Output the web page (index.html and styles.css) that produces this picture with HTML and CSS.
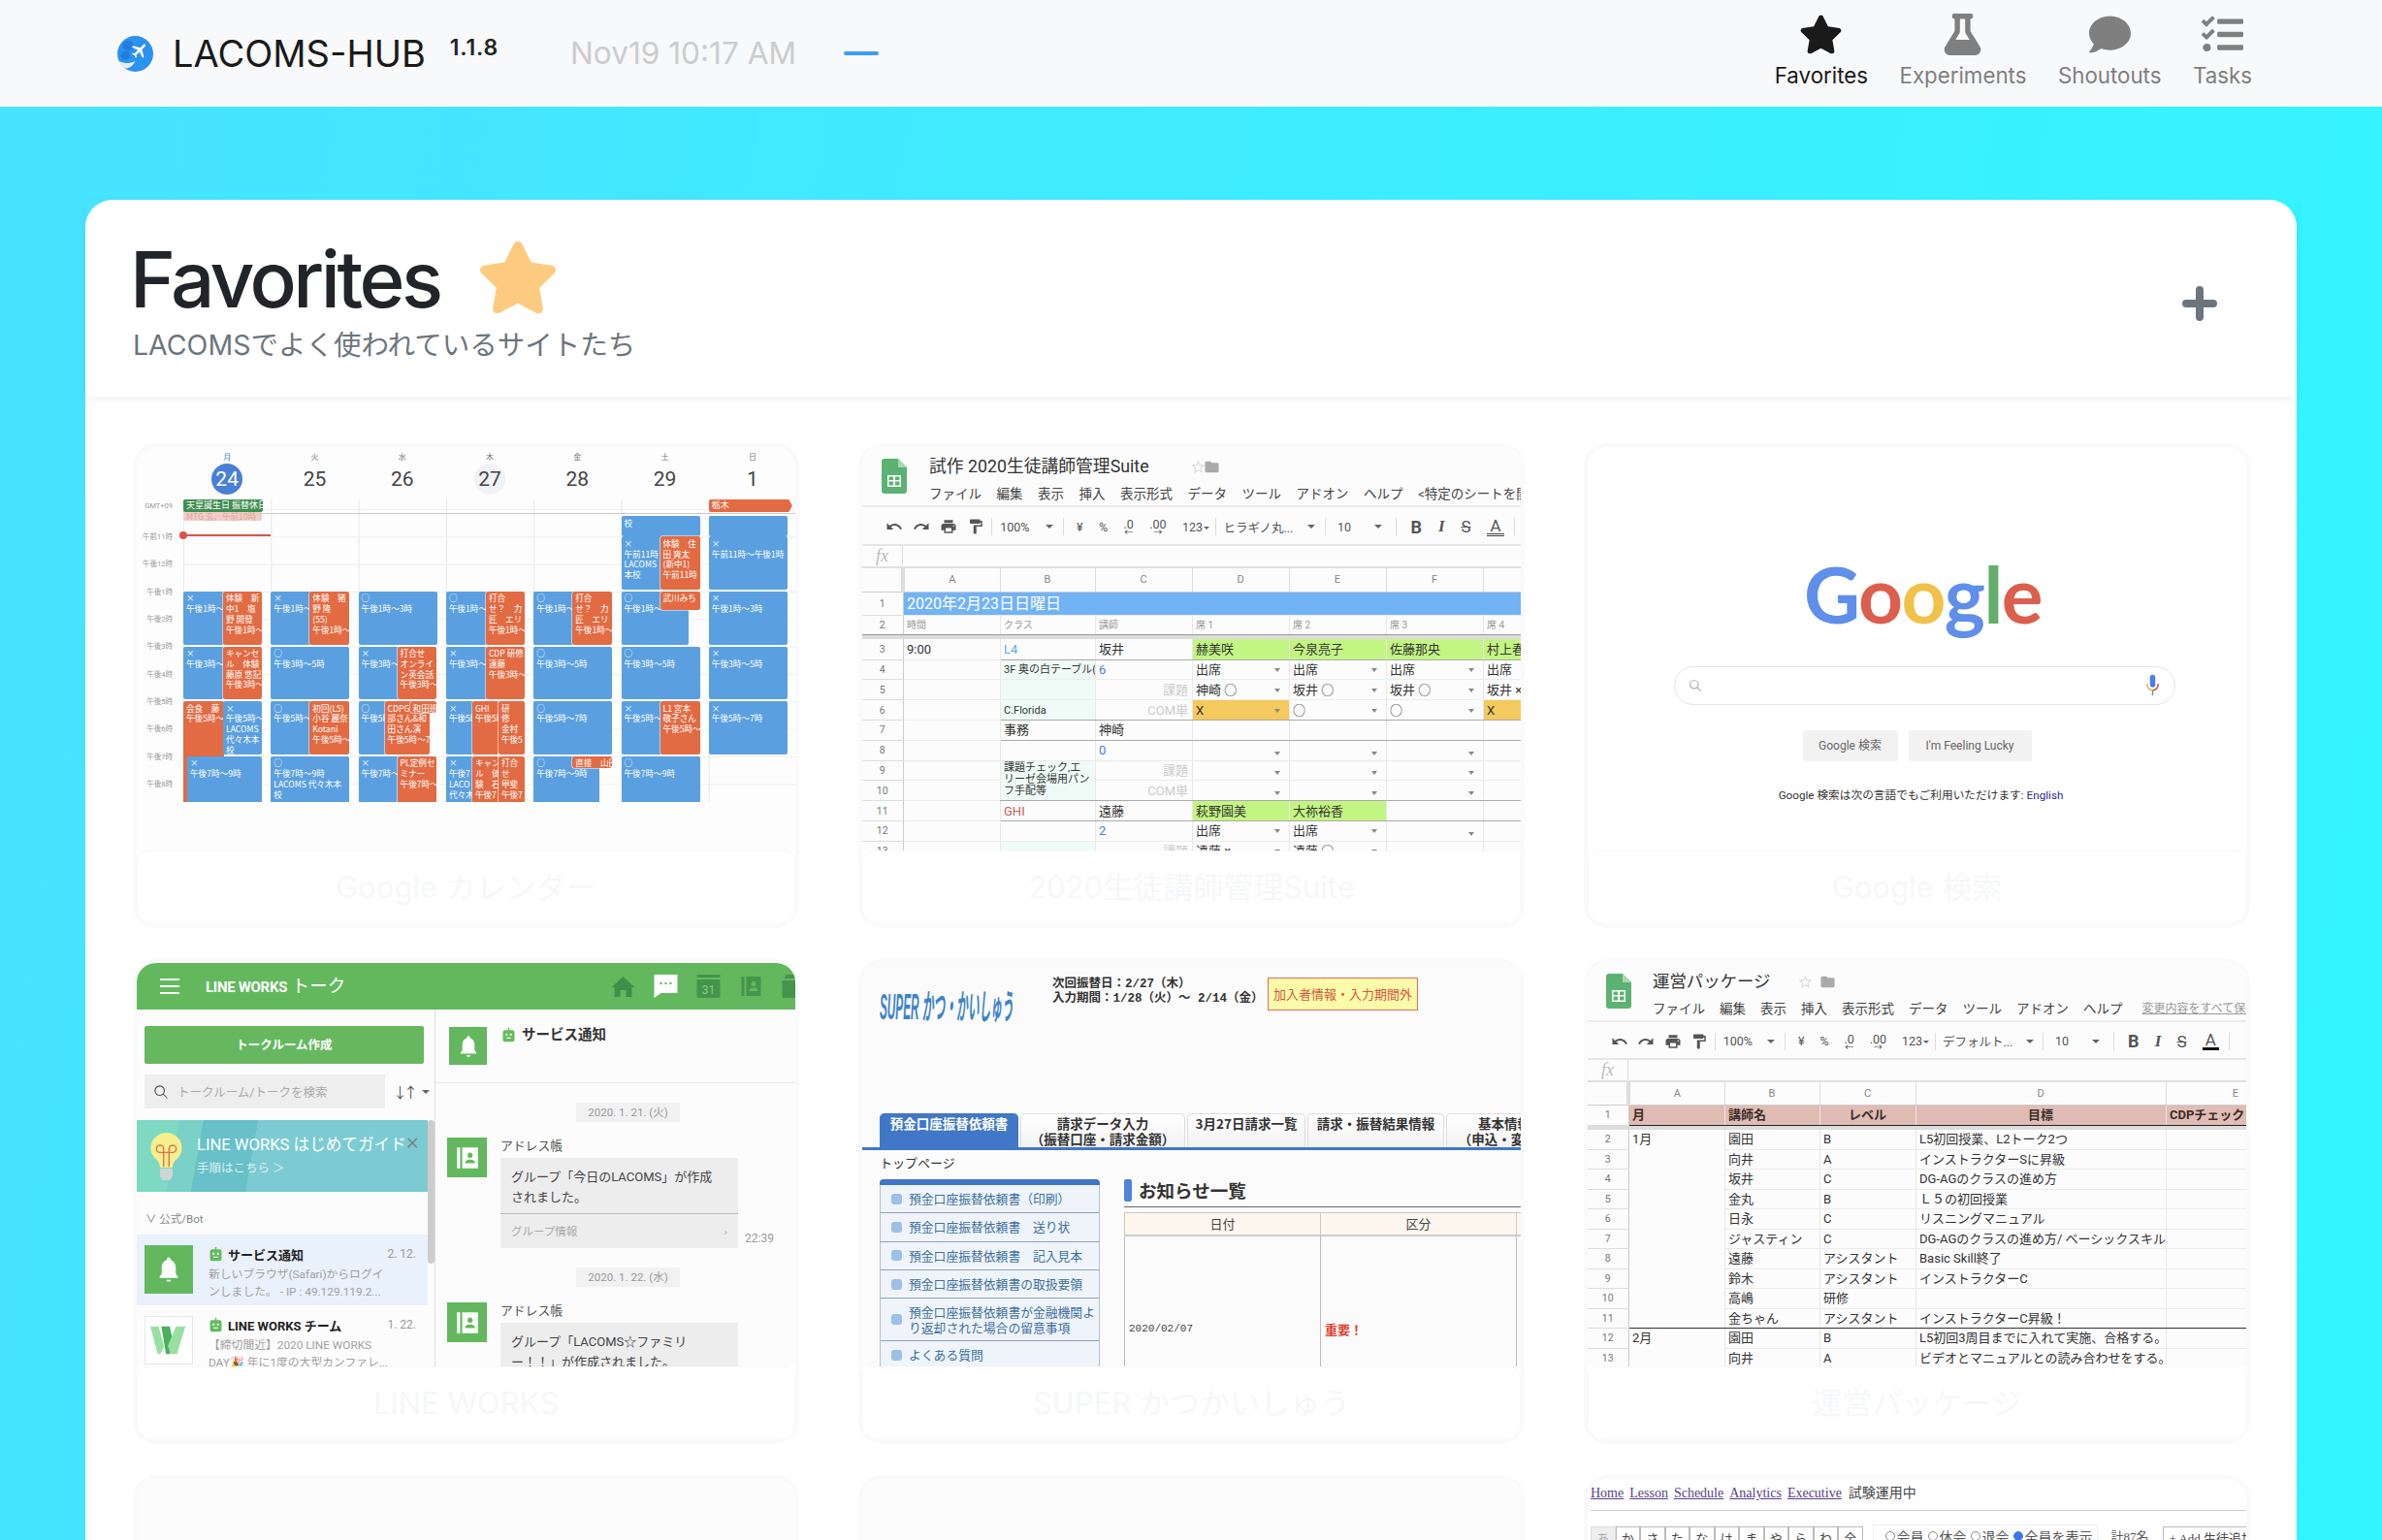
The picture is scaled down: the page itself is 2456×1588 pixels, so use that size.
FILE: index.html
```html
<!DOCTYPE html>
<html lang="ja">
<head>
<meta charset="utf-8">
<title>LACOMS-HUB</title>
<link rel="stylesheet" href="styles.css">
</head>
<body>
<svg class="defs" aria-hidden="true">
  <symbol id="i-star" viewBox="0 0 576 512"><path d="M259.3 17.8L194 150.2 47.9 171.5c-26.2 3.8-36.7 36.1-17.7 54.6l105.7 103-25 145.5c-4.5 26.3 23.2 46 46.4 33.7L288 439.6l130.7 68.7c23.2 12.2 50.9-7.4 46.4-33.7l-25-145.5 105.7-103c19-18.5 8.5-50.8-17.7-54.6L382 150.2 316.7 17.8c-11.7-23.6-45.6-23.9-57.4 0z"/></symbol>
  <symbol id="i-undo" viewBox="0 0 24 24"><path d="M12.5 8c-2.65 0-5.05.99-6.9 2.6L2 7v9h9l-3.62-3.62c1.39-1.16 3.16-1.88 5.12-1.88 3.54 0 6.55 2.31 7.6 5.5l2.37-.78C21.08 11.03 17.15 8 12.5 8z"/></symbol>
  <symbol id="i-redo" viewBox="0 0 24 24"><path d="M18.4 10.6C16.55 8.99 14.15 8 11.5 8c-4.65 0-8.58 3.03-9.96 7.22L3.9 16c1.05-3.19 4.05-5.5 7.6-5.5 1.95 0 3.73.72 5.12 1.88L13 16h9V7l-3.6 3.6z"/></symbol>
  <symbol id="i-print" viewBox="0 0 24 24"><path d="M19 8H5c-1.66 0-3 1.34-3 3v6h4v4h12v-4h4v-6c0-1.66-1.34-3-3-3zm-3 11H8v-5h8v5zm3-7c-.55 0-1-.45-1-1s.45-1 1-1 1 .45 1 1-.45 1-1 1zm-1-9H6v4h12V3z"/></symbol>
  <symbol id="i-paint" viewBox="0 0 24 24"><path d="M18 4V3c0-.55-.45-1-1-1H5c-.55 0-1 .45-1 1v4c0 .55.45 1 1 1h12c.55 0 1-.45 1-1V6h1v4H9v11c0 .55.45 1 1 1h2c.55 0 1-.45 1-1v-9h8V4h-3z"/></symbol>
  <symbol id="i-sheet" viewBox="0 0 26 36"><path fill="#5cb272" d="M3 0H17L26 9V33a3 3 0 0 1-3 3H3a3 3 0 0 1-3-3V3a3 3 0 0 1 3-3Z"/><path fill="#a5d8b0" d="M17 0L26 9H17Z"/><path fill="#fff" d="M6 17H20V29H6ZM7.5 18.5V22H12V18.5ZM14 18.5V22H18.5V18.5ZM7.5 23.5V27.5H12V23.5ZM14 23.5V27.5H18.5V23.5Z" fill-rule="evenodd"/></symbol>
  <symbol id="i-folder" viewBox="0 0 24 24"><path d="M10 4H4c-1.1 0-2 .9-2 2v12c0 1.1.9 2 2 2h16c1.1 0 2-.9 2-2V8c0-1.1-.9-2-2-2h-8z"/></symbol>
  <symbol id="i-ostar" viewBox="0 0 24 24"><path d="M22 9.24l-7.19-.62L12 2 9.19 8.63 2 9.24l5.46 4.73L5.82 21 12 17.27 18.18 21l-1.63-7.03L22 9.24zM12 15.4l-3.76 2.27 1-4.28-3.32-2.88 4.38-.38L12 6.1l1.71 4.04 4.38.38-3.32 2.88 1 4.28L12 15.4z"/></symbol>
  <symbol id="i-bell" viewBox="0 0 24 24"><path d="M12 2a1.6 1.6 0 0 0-1.6 1.6v.6C7.6 5 6.2 7.5 6.2 10.5v5L4.5 18v1h15v-1l-1.700-2.500v-5c0-3-1.400-5.500-4.200-6.300v-.6A1.600 1.600 0 0 0 12 2zM10 20.500a2 1.500 0 0 0 4 0z"/></symbol>
  <symbol id="i-book" viewBox="0 0 24 24"><path d="M2 2h3v20H2zM7 2h15v20H7zM14.500 7a2.500 2.500 0 1 0 .01 0zM10 17v-1c0-1.800 3-2.500 4.500-2.500S19 14.200 19 16v1z" fill-rule="evenodd"/></symbol>
  <symbol id="i-bot" viewBox="0 0 20 20"><path fill="#66bb5e" d="M9 0h2v3h4a3 3 0 0 1 3 3v10a3 3 0 0 1-3 3H5a3 3 0 0 1-3-3V6a3 3 0 0 1 3-3h4z"/><circle cx="7" cy="9" r="1.500" fill="#fff"/><circle cx="13" cy="9" r="1.500" fill="#fff"/><rect x="7" y="13" width="6" height="1.500" fill="#fff"/></symbol>
  <symbol id="i-search" viewBox="0 0 24 24"><path d="M10 2a8 8 0 0 1 6.200 13l6 6.200-1.100 1-6-6.100A8 8 0 1 1 10 2zm0 1.600a6.400 6.400 0 1 0 0 12.800 6.400 6.400 0 0 0 0-12.800z"/></symbol>
</svg>

<header class="topbar">
  <svg class="logo" viewBox="0 0 40 40">
    <circle cx="20" cy="20" r="20" fill="#2b93ef"/>
    <circle cx="12" cy="11" r="6" fill="#1f7fdc"/>
    <circle cx="9" cy="22" r="5" fill="#1f7fdc"/>
    <path fill="#e8ecef" d="M2 28c6 3 12 3 18 0-3 6-8 9-12 8-3-1-5-4-6-8z"/>
    <path fill="#fff" transform="translate(13 6) rotate(45 12 12) scale(.9)" d="M21 16v-2l-8-5V3.500c0-.830-.670-1.500-1.500-1.500S10 2.670 10 3.500V9l-8 5v2l8-2.500V19l-2 1.500V22l3.500-1 3.500 1v-1.500L13 19v-5.500l8 2.500z"/>
  </svg>
  <span class="brand">LACOMS-HUB</span>
  <span class="version">1.1.8</span>
  <span class="clock">Nov19 10:17 AM</span>
  <span class="dash"></span>
  <nav class="nav">
    <a class="nav-item is-active">
      <svg class="nav-icon" viewBox="0 0 576 512"><use href="#i-star"/></svg>
      <span>Favorites</span>
    </a>
    <a class="nav-item">
      <svg class="nav-icon" viewBox="0 0 448 512"><path d="M437.2 403.5L320 215V64h8c13.3 0 24-10.7 24-24V24c0-13.3-10.7-24-24-24H120c-13.3 0-24 10.7-24 24v16c0 13.3 10.7 24 24 24h8v151L10.8 403.5C-18.5 450.6 15.3 512 70.9 512h306.2c55.7 0 89.4-61.5 60.1-108.5zM137.9 320l48.2-77.6c3.7-5.2 5.8-11.6 5.8-18.4V64h64v160c0 6.9 2.2 13.2 5.800 18.4l48.2 77.6h-172z"/></svg>
      <span>Experiments</span>
    </a>
    <a class="nav-item">
      <svg class="nav-icon" viewBox="0 0 512 512"><path d="M256 32C114.6 32 0 125.1 0 240c0 49.6 21.4 95 57 130.7C44.5 421.1 2.7 466 2.2 466.5c-2.2 2.3-2.8 5.7-1.5 8.7S4.8 480 8 480c66.3 0 116-31.8 140.6-51.4 32.7 12.3 69 19.4 107.4 19.4 141.4 0 256-93.1 256-208S397.4 32 256 32z"/></svg>
      <span>Shoutouts</span>
    </a>
    <a class="nav-item">
      <svg class="nav-icon" viewBox="0 0 512 512"><path d="M139.61 35.5a12 12 0 0 0-17 0L58.93 98.81l-22.7-22.12a12 12 0 0 0-17 0L3.53 92.41a12 12 0 0 0 0 17l47.59 47.4a12.78 12.78 0 0 0 17.61 0l15.59-15.62L156.52 69a12.09 12.09 0 0 0 .09-17zm0 159.19a12 12 0 0 0-17 0l-63.68 63.72-22.7-22.1a12 12 0 0 0-17 0L3.53 252a12 12 0 0 0 0 17L51 316.5a12.77 12.77 0 0 0 17.6 0l15.7-15.69 72.2-72.22a12 12 0 0 0 .09-16.9zM64 368c-26.49 0-48.59 21.5-48.59 48S37.53 464 64 464a48 48 0 0 0 0-96zm432 16H208a16 16 0 0 0-16 16v32a16 16 0 0 0 16 16h288a16 16 0 0 0 16-16v-32a16 16 0 0 0-16-16zm0-320H208a16 16 0 0 0-16 16v32a16 16 0 0 0 16 16h288a16 16 0 0 0 16-16V80a16 16 0 0 0-16-16zm0 160H208a16 16 0 0 0-16 16v32a16 16 0 0 0 16 16h288a16 16 0 0 0 16-16v-32a16 16 0 0 0-16-16z"/></svg>
      <span>Tasks</span>
    </a>
  </nav>
</header>

<main class="panel">
  <section class="panel-head">
    <div>
      <h1 class="title">Favorites<svg class="title-star" viewBox="0 0 576 512"><use href="#i-star"/></svg></h1>
      <p class="subtitle">LACOMSでよく使われているサイトたち</p>
    </div>
    <svg class="add" viewBox="0 0 36 36"><path d="M18 0a4 4 0 0 1 4 4v10h10a4 4 0 0 1 0 8H22v10a4 4 0 0 1-8 0V22H4a4 4 0 0 1 0-8h10V4a4 4 0 0 1 4-4z"/></svg>
  </section>

  <section class="grid">

    <!-- Google Calendar -->
    <article class="card">
      <div class="thumb cal">
        <div class="cal-head">
          <div class="cal-day is-today"><small>月</small><b>24</b></div>
          <div class="cal-day"><small>火</small><b>25</b></div>
          <div class="cal-day"><small>水</small><b>26</b></div>
          <div class="cal-day is-soft"><small>木</small><b>27</b></div>
          <div class="cal-day"><small>金</small><b>28</b></div>
          <div class="cal-day"><small>土</small><b>29</b></div>
          <div class="cal-day"><small>日</small><b>1</b></div>
        </div>
        <div class="cal-body">
          <div class="hours">
            <span class="gmt">GMT+09</span>
            <span>午前11時</span><span>午後12時</span><span>午後1時</span><span>午後2時</span><span>午後3時</span><span>午後4時</span><span>午後5時</span><span>午後6時</span><span>午後7時</span><span>午後8時</span>
          </div>
          <div class="lanes">
            <div class="ev g allday" style="--d:0;--w:82">天皇誕生日 振替休日</div>
            <div class="ev p allday2" style="--d:0;--w:81">MTG 玄、午前10時</div>
            <div class="ev o allday tag" style="--d:6;--w:86">栃木</div>
            <div class="now"></div>

            <div class="ev b" style="--d:0;--t:13;--w:42">×<br>午後1時〜</div>
            <div class="ev o" style="--d:0;--x:41;--t:13;--w:40">体験　新<br>中1　塩<br>野 開發<br>午後1時〜</div>
            <div class="ev b" style="--d:0;--t:15;--w:42">×<br>午後3時〜</div>
            <div class="ev o" style="--d:0;--x:41;--t:15;--w:40">キャンセ<br>ル　体験<br>藤原 悠記<br>午後3時〜</div>
            <div class="ev o" style="--d:0;--t:17;--h:6;--w:42">会食　藤<br>午後5時〜</div>
            <div class="ev b" style="--d:0;--x:41;--t:17;--w:40">×<br>午後5時〜<br>LACOMS<br>代々木本<br>校</div>
            <div class="ev b" style="--d:0;--x:4;--t:19;--h:4;--w:77">×<br>午後7時〜9時</div>

            <div class="ev b" style="--d:1;--t:13;--w:42">×<br>午後1時〜</div>
            <div class="ev o" style="--d:1;--x:40;--t:13;--w:41">体験　猪<br>野 隆<br>(55)<br>午後1時〜</div>
            <div class="ev b" style="--d:1;--t:15">○<br>午後3時〜5時</div>
            <div class="ev b" style="--d:1;--t:17;--w:42">○<br>午後5時〜</div>
            <div class="ev o" style="--d:1;--x:40;--t:17;--w:41">初回(L5)<br>小谷 麗奈<br>Kotani<br>午後5時〜</div>
            <div class="ev b" style="--d:1;--t:19;--h:4">○<br>午後7時〜9時<br>LACOMS 代々木本<br>校</div>

            <div class="ev b" style="--d:2;--t:13">○<br>午後1時〜3時</div>
            <div class="ev b" style="--d:2;--t:15;--w:42">×<br>午後3時〜</div>
            <div class="ev o" style="--d:2;--x:40;--t:15;--w:40">打合せ<br>オンライ<br>ン英会話<br>午後3時〜</div>
            <div class="ev b" style="--d:2;--t:17;--w:28">○<br>午後5時</div>
            <div class="ev o" style="--d:2;--x:27;--t:17;--w:46">CDPG<br>部さん&amp;和<br>田さん演<br>午後5時〜7</div>
            <div class="ev o" style="--d:2;--x:53;--t:17;--h:.5;--w:27">和田班</div>
            <div class="ev b" style="--d:2;--t:19;--h:4;--w:42">×<br>午後7時〜</div>
            <div class="ev o" style="--d:2;--x:40;--t:19;--h:4;--w:40">PL定例セ<br>ミナー<br>午後7時〜</div>

            <div class="ev b" style="--d:3;--t:13;--w:42">○<br>午後1時〜</div>
            <div class="ev o" style="--d:3;--x:41;--t:13;--w:40">打合<br>せ？　力<br>匠　エリ<br>午後1時〜</div>
            <div class="ev b" style="--d:3;--t:15;--w:42">×<br>午後3時〜</div>
            <div class="ev o" style="--d:3;--x:41;--t:15;--w:40">CDP 研修<br>遠藤<br>午後3時〜</div>
            <div class="ev b" style="--d:3;--t:17;--w:28">×<br>午後5時</div>
            <div class="ev o" style="--d:3;--x:27;--t:17;--w:27">GHI<br>午後5時</div>
            <div class="ev o" style="--d:3;--x:54;--t:17;--w:27">研<br>修<br>金村<br>午後5</div>
            <div class="ev b" style="--d:3;--t:19;--h:4;--w:28">×<br>午後7<br>LACO<br>代々木</div>
            <div class="ev o" style="--d:3;--x:27;--t:19;--h:4;--w:27">キャン<br>ル　価<br>験　石<br>午後7</div>
            <div class="ev o" style="--d:3;--x:54;--t:19;--h:4;--w:27">打合<br>せ<br>甲斐<br>午後7</div>

            <div class="ev b" style="--d:4;--t:13;--w:42">○<br>午後1時〜</div>
            <div class="ev o" style="--d:4;--x:40;--t:13;--w:41">打合<br>せ？　力<br>匠　エリ<br>午後1時〜</div>
            <div class="ev b" style="--d:4;--t:15">○<br>午後3時〜5時</div>
            <div class="ev b" style="--d:4;--t:17">○<br>午後5時〜7時</div>
            <div class="ev b" style="--d:4;--t:19;--h:4;--w:68">○<br>午後7時〜9時</div>
            <div class="ev o" style="--d:4;--x:40;--t:19;--h:.5;--w:41">直接　山田</div>

            <div class="ev b" style="--d:5;--t:10.25;--h:.8">校</div>
            <div class="ev b" style="--d:5;--t:11;--w:42">×<br>午前11時<br>LACOMS<br>本校</div>
            <div class="ev o" style="--d:5;--x:40;--t:11;--w:41">体験　住<br>田 爽太<br>(新中1)<br>午前11時</div>
            <div class="ev b" style="--d:5;--t:13;--w:69">○<br>午後1時〜</div>
            <div class="ev o" style="--d:5;--x:40;--t:13;--h:.75;--w:41">武川みち</div>
            <div class="ev b" style="--d:5;--t:15">○<br>午後3時〜5時</div>
            <div class="ev b" style="--d:5;--t:17;--w:42">×<br>午後5時〜</div>
            <div class="ev o" style="--d:5;--x:40;--t:17;--w:41">L1 宮本<br>敬子さん<br>午後5時〜</div>
            <div class="ev b" style="--d:5;--t:19;--h:4">○<br>午後7時〜9時</div>

            <div class="ev b" style="--d:6;--t:10.25;--h:.8"></div>
            <div class="ev b" style="--d:6;--t:11">×<br>午前11時〜午後1時</div>
            <div class="ev b" style="--d:6;--t:13">×<br>午後1時〜3時</div>
            <div class="ev b" style="--d:6;--t:15">×<br>午後3時〜5時</div>
            <div class="ev b" style="--d:6;--t:17">×<br>午後5時〜7時</div>
          </div>
        </div>
      </div>
      <div class="caption">Google カレンダー</div>
    </article>

    <!-- Sheet A -->
    <article class="card">
      <div class="thumb sheet sheet-a">
        <div class="sh-head">
          <svg class="sh-logo"><use href="#i-sheet"/></svg>
          <div>
            <div class="sh-title">試作 2020生徒講師管理Suite<svg class="sh-mini star"><use href="#i-ostar"/></svg><svg class="sh-mini"><use href="#i-folder"/></svg></div>
            <div class="sh-menu"><span>ファイル</span><span>編集</span><span>表示</span><span>挿入</span><span>表示形式</span><span>データ</span><span>ツール</span><span>アドオン</span><span>ヘルプ</span><span>&lt;特定のシートを開く&gt;</span></div>
          </div>
        </div>
        <div class="tb">
          <div class="tg g1"><svg class="ti"><use href="#i-undo"/></svg><svg class="ti"><use href="#i-redo"/></svg><svg class="ti"><use href="#i-print"/></svg><svg class="ti"><use href="#i-paint"/></svg></div>
          <div class="tg g2"><span>100%</span><i class="caret"></i></div>
          <div class="tg g3"><span>¥</span><span>%</span><span class="dec">.0<em>←</em></span><span class="dec">.00<em>→</em></span><span>123<i class="caret mini"></i></span></div>
          <div class="tg g4"><span>ヒラギノ丸...</span><i class="caret"></i></div>
          <div class="tg g5"><span>10</span><i class="caret"></i></div>
          <div class="tg g6"><b class="fmt">B</b><i class="fmt serif">I</i><s class="fmt">S</s><span class="fmt tcolor">A</span></div>
        </div>
        <div class="fx"><i>fx</i></div>
        <table class="tbl">
          <colgroup><col class="c-rh"><col class="c-100"><col class="c-98"><col class="c-100"><col class="c-100"><col class="c-100"><col class="c-100"><col class="c-100"></colgroup>
          <tr class="ch"><td class="corner"></td><td>A</td><td>B</td><td>C</td><td>D</td><td>E</td><td>F</td><td></td></tr>
          <tr class="r1"><td class="rh">1</td><td colspan="7" class="blue">2020年2月23日日曜日</td></tr>
          <tr class="r2"><td class="rh">2</td><td>時間</td><td>クラス</td><td>講師</td><td>席 1</td><td>席 2</td><td>席 3</td><td>席 4</td></tr>
          <tr class="freeze"><td colspan="8"></td></tr>
          <tr><td class="rh">3</td><td>9:00</td><td class="dk lblue">L4</td><td class="dk">坂井</td><td class="dk lime">赫美咲</td><td class="dk lime">今泉亮子</td><td class="dk lime">佐藤那央</td><td class="dk lime">村上春香</td></tr>
          <tr><td class="rh">4</td><td></td><td class="mint tiny">3F 奥の白テーブル(</td><td class="nblue">6</td><td class="dd">出席</td><td class="dd">出席</td><td class="dd">出席</td><td class="dd">出席</td></tr>
          <tr><td class="rh">5</td><td></td><td class="mint"></td><td class="ghost">課題</td><td class="dd">神崎 ○</td><td class="dd">坂井 ○</td><td class="dd">坂井 ○</td><td class="dd">坂井 ×</td></tr>
          <tr><td class="rh">6</td><td></td><td class="mint tiny dk">C.Florida</td><td class="ghost dk">COM単</td><td class="dd amber dk">X</td><td class="dd dk">○</td><td class="dd dk">○</td><td class="amber dk">X</td></tr>
          <tr><td class="rh">7</td><td></td><td class="dk">事務</td><td class="dk">神崎</td><td class="dk"></td><td class="dk"></td><td class="dk"></td><td class="dk"></td></tr>
          <tr><td class="rh">8</td><td></td><td></td><td class="nblue">0</td><td class="dd"></td><td class="dd"></td><td class="dd"></td><td></td></tr>
          <tr><td class="rh">9</td><td></td><td class="mint tiny wrap dk" rowspan="2">課題チェック,エ<br>リーゼ会場用パン<br>フ手配等</td><td class="ghost">課題</td><td class="dd"></td><td class="dd"></td><td class="dd"></td><td></td></tr>
          <tr><td class="rh">10</td><td></td><td class="ghost dk">COM単</td><td class="dd dk"></td><td class="dd dk"></td><td class="dd dk"></td><td class="dk"></td></tr>
          <tr><td class="rh">11</td><td></td><td class="dk red">GHI</td><td class="dk">遠藤</td><td class="dk lime">萩野園美</td><td class="dk lime">大祢裕香</td><td class="dk"></td><td class="dk"></td></tr>
          <tr><td class="rh">12</td><td></td><td></td><td class="nblue">2</td><td class="dd">出席</td><td class="dd">出席</td><td class="dd"></td><td></td></tr>
          <tr><td class="rh">13</td><td></td><td class="mint"></td><td class="ghost">課題</td><td class="dd">遠藤 ×</td><td class="dd">遠藤 ○</td><td class="dd"></td><td></td></tr>
        </table>
      </div>
      <div class="caption">2020生徒講師管理Suite</div>
    </article>

    <!-- Google -->
    <article class="card">
      <div class="thumb ggl">
        <div class="ggl-logo"><span class="cb">G</span><span class="cr">o</span><span class="cy">o</span><span class="cb">g</span><span class="cg">l</span><span class="cr">e</span></div>
        <div class="ggl-search">
          <svg class="ggl-lens"><use href="#i-search"/></svg>
          <svg class="ggl-mic" viewBox="0 0 14 24"><rect x="4" y="0" width="6" height="14" rx="3" fill="#4a80ec"/><path d="M1 10a6 6 0 0 0 6 7" fill="none" stroke="#e9b23e" stroke-width="1.600"/><path d="M13 10a6 6 0 0 1-6 7" fill="none" stroke="#d9493a" stroke-width="1.600"/><path d="M7 17v6" stroke="#5aae62" stroke-width="1.600"/></svg>
        </div>
        <div class="ggl-btns"><span class="ggl-btn b1">Google 検索</span><span class="ggl-btn b2">I'm Feeling Lucky</span></div>
        <p class="ggl-lang">Google 検索は次の言語でもご利用いただけます: <a>English</a></p>
      </div>
      <div class="caption">Google 検索</div>
    </article>

    <!-- LINE WORKS -->
    <article class="card">
      <div class="thumb lw">
        <div class="lw-bar">
          <div class="lw-burger"><i></i><i></i><i></i></div>
          <div class="lw-name"><b>LINE WORKS</b> トーク</div>
          <div class="lw-apps">
            <svg viewBox="0 0 24 24"><path fill="#3f8f4a" d="M12 2L0 13h3v10h6v-7h6v7h6V13h3z"/></svg>
            <svg viewBox="0 0 24 24"><path fill="#fff" d="M0 0h24v19H7l-7 5z"/><circle cx="7" cy="9" r="1.200" fill="#63b85e"/><circle cx="12" cy="9" r="1.200" fill="#63b85e"/><circle cx="17" cy="9" r="1.200" fill="#63b85e"/></svg>
            <svg viewBox="0 0 24 24"><path fill="#45944c" d="M0 0h24v3H0zM0 5h24v19H0z"/><text x="12" y="20" font-size="12" fill="#8ccb87" text-anchor="middle">31</text></svg>
            <svg viewBox="0 0 24 24" class="lw-book"><use href="#i-book"/></svg>
            <svg viewBox="0 0 24 24"><path fill="#45944c" d="M4 0h16l2 4H2zM0 6h24v18H0z"/></svg>
          </div>
        </div>
        <div class="lw-main">
          <div class="lw-left">
            <div class="lw-create">トークルーム作成</div>
            <div class="lw-find">
              <div class="lw-input"><svg><use href="#i-search"/></svg>トークルーム/トークを検索</div>
              <span class="lw-sort">↓↑<i class="caret"></i></span>
            </div>
            <div class="lw-scroll">
              <div class="lw-list">
                <div class="lw-banner">
                  <svg class="lw-bulb" viewBox="0 0 34 54"><path fill="#f7ee8e" d="M17 0a17 17 0 0 1 10 31c-2 2-3 5-3 8H10c0-3-1-6-3-8A17 17 0 0 1 17 0z"/><path fill="#cfd4d6" d="M10 40h14v8l-3 5h-8l-3-5z"/><path fill="none" stroke="#e0704e" stroke-width="1.500" d="M14 38V18a4 4 0 1 0-4 4h14a4 4 0 1 0-4-4v20"/></svg>
                  <div class="lw-bt">
                    <div class="lw-bt1">LINE WORKS はじめてガイド</div>
                    <div class="lw-bt2">手順はこちら ＞</div>
                  </div>
                  <span class="lw-x">×</span>
                </div>
                <div class="lw-sec">∨ 公式/Bot</div>
                <div class="lw-row is-sel">
                  <div class="lw-av"><svg><use href="#i-bell"/></svg></div>
                  <div class="lw-info">
                    <div class="lw-top"><svg class="lw-bot"><use href="#i-bot"/></svg><b>サービス通知</b><span>2. 12.</span></div>
                    <p>新しいブラウザ(Safari)からログイ<br>ンしました。 - IP : 49.129.119.2...</p>
                  </div>
                </div>
                <div class="lw-row">
                  <div class="lw-av is-w"><svg viewBox="0 0 40 30"><path fill="#98e0a0" d="M0 0h9l6 22-4 8H8z"/><path fill="#4aae5c" d="M12 0h9l4 18-4 12h-4z"/><path fill="#98e0a0" d="M22 30l-3-9 9-21h10L29 30z"/></svg></div>
                  <div class="lw-info">
                    <div class="lw-top"><svg class="lw-bot"><use href="#i-bot"/></svg><b>LINE WORKS チーム</b><span>1. 22.</span></div>
                    <p>【締切間近】2020 LINE WORKS<br>DAY🎉 年に1度の大型カンファレ...</p>
                  </div>
                </div>
              </div>
              <div class="lw-thumb"></div>
            </div>
          </div>
          <div class="lw-right">
            <div class="lw-chat-head">
              <div class="lw-av big"><svg><use href="#i-bell"/></svg></div>
              <svg class="lw-bot"><use href="#i-bot"/></svg><b>サービス通知</b>
            </div>
            <div class="lw-pill">2020. 1. 21. (火)</div>
            <div class="lw-msg">
              <div class="lw-av big"><svg><use href="#i-book"/></svg></div>
              <div class="lw-msg-body">
                <div class="lw-from">アドレス帳</div>
                <div class="lw-bubble-row">
                  <div class="lw-bubble"><p>グループ「今日のLACOMS」が作成<br>されました。</p><div class="lw-link">グループ情報<span>›</span></div></div>
                  <time>22:39</time>
                </div>
              </div>
            </div>
            <div class="lw-pill">2020. 1. 22. (水)</div>
            <div class="lw-msg">
              <div class="lw-av big"><svg><use href="#i-book"/></svg></div>
              <div class="lw-msg-body">
                <div class="lw-from">アドレス帳</div>
                <div class="lw-bubble-row">
                  <div class="lw-bubble"><p>グループ「LACOMS☆ファミリ<br>ー！！」が作成されました。</p></div>
                </div>
              </div>
            </div>
          </div>
        </div>
      </div>
      <div class="caption">LINE WORKS</div>
    </article>

    <!-- SUPER -->
    <article class="card">
      <div class="thumb sup">
        <div class="sup-top">
          <div class="sup-logo"><span>SUPER かつ・かいしゅう</span></div>
          <div class="sup-dates">次回振替日：2/27（木）<br>入力期間：1/28（火）〜 2/14（金）</div>
          <div class="sup-flag">加入者情報・入力期間外</div>
        </div>
        <div class="sup-tabs">
          <div class="sup-tab t1 is-on">預金口座振替依頼書</div>
          <div class="sup-tab t2">請求データ入力<br>（振替口座・請求金額）</div>
          <div class="sup-tab t3">3月27日請求一覧</div>
          <div class="sup-tab t4">請求・振替結果情報</div>
          <div class="sup-tab t5">基本情報<br>（申込・変更）</div>
        </div>
        <div class="sup-crumb">トップページ</div>
        <div class="sup-main">
          <ul class="sup-side">
            <li>預金口座振替依頼書（印刷）</li>
            <li>預金口座振替依頼書　送り状</li>
            <li>預金口座振替依頼書　記入見本</li>
            <li>預金口座振替依頼書の取扱要領</li>
            <li class="two">預金口座振替依頼書が金融機関よ<br>り返却された場合の留意事項</li>
            <li>よくある質問</li>
          </ul>
          <div class="sup-news">
            <h3>お知らせ一覧</h3>
            <table class="sup-table">
              <tr><th>日付</th><th>区分</th><th></th></tr>
              <tr><td class="mono">2020/02/07</td><td class="alert">重要！</td><td></td></tr>
            </table>
          </div>
        </div>
      </div>
      <div class="caption">SUPER かつかいしゅう</div>
    </article>

    <!-- Sheet B -->
    <article class="card">
      <div class="thumb sheet sheet-b">
        <div class="sh-head">
          <svg class="sh-logo"><use href="#i-sheet"/></svg>
          <div>
            <div class="sh-title">運営パッケージ<svg class="sh-mini star"><use href="#i-ostar"/></svg><svg class="sh-mini"><use href="#i-folder"/></svg></div>
            <div class="sh-menu"><span>ファイル</span><span>編集</span><span>表示</span><span>挿入</span><span>表示形式</span><span>データ</span><span>ツール</span><span>アドオン</span><span>ヘルプ</span><span class="sh-saved">変更内容をすべて保存しました</span></div>
          </div>
        </div>
        <div class="tb">
          <div class="tg g1"><svg class="ti"><use href="#i-undo"/></svg><svg class="ti"><use href="#i-redo"/></svg><svg class="ti"><use href="#i-print"/></svg><svg class="ti"><use href="#i-paint"/></svg></div>
          <div class="tg g2"><span>100%</span><i class="caret"></i></div>
          <div class="tg g3"><span>¥</span><span>%</span><span class="dec">.0<em>←</em></span><span class="dec">.00<em>→</em></span><span>123<i class="caret mini"></i></span></div>
          <div class="tg g4"><span>デフォルト...</span><i class="caret"></i></div>
          <div class="tg g5"><span>10</span><i class="caret"></i></div>
          <div class="tg g6"><b class="fmt">B</b><i class="fmt serif">I</i><s class="fmt">S</s><span class="fmt tcolor solid">A</span></div>
        </div>
        <div class="fx"><i>fx</i></div>
        <table class="tbl">
          <colgroup><col class="c-rh"><col class="c-99"><col class="c-98"><col class="c-99"><col class="c-258"><col class="c-144"></colgroup>
          <tr class="ch"><td class="corner"></td><td>A</td><td>B</td><td>C</td><td>D</td><td>E</td></tr>
          <tr class="rose"><td class="rh">1</td><td>月</td><td>講師名</td><td class="ctr">レベル</td><td class="ctr">目標</td><td>CDPチェック日</td></tr>
          <tr class="freeze"><td colspan="6"></td></tr>
          <tr><td class="rh">2</td><td class="noline">1月</td><td>園田</td><td>B</td><td>L5初回授業、L2トーク2つ</td><td></td></tr>
          <tr><td class="rh">3</td><td class="noline"></td><td>向井</td><td>A</td><td>インストラクターSに昇級</td><td></td></tr>
          <tr><td class="rh">4</td><td class="noline"></td><td>坂井</td><td>C</td><td>DG-AGのクラスの進め方</td><td></td></tr>
          <tr><td class="rh">5</td><td class="noline"></td><td>金丸</td><td>B</td><td>Ｌ５の初回授業</td><td></td></tr>
          <tr><td class="rh">6</td><td class="noline"></td><td>日永</td><td>C</td><td>リスニングマニュアル</td><td></td></tr>
          <tr><td class="rh">7</td><td class="noline"></td><td>ジャスティン</td><td>C</td><td>DG-AGのクラスの進め方/ ベーシックスキル</td><td></td></tr>
          <tr><td class="rh">8</td><td class="noline"></td><td>遠藤</td><td>アシスタント</td><td>Basic Skill終了</td><td></td></tr>
          <tr><td class="rh">9</td><td class="noline"></td><td>鈴木</td><td>アシスタント</td><td>インストラクターC</td><td></td></tr>
          <tr><td class="rh">10</td><td class="noline"></td><td>高嶋</td><td>研修</td><td></td><td></td></tr>
          <tr class="rule"><td class="rh">11</td><td></td><td>金ちゃん</td><td>アシスタント</td><td>インストラクターC昇級！</td><td></td></tr>
          <tr><td class="rh">12</td><td class="noline">2月</td><td>園田</td><td>B</td><td>L5初回3周目までに入れて実施、合格する。</td><td></td></tr>
          <tr><td class="rh">13</td><td class="noline"></td><td>向井</td><td>A</td><td>ビデオとマニュアルとの読み合わせをする。</td><td></td></tr>
        </table>
      </div>
      <div class="caption">運営パッケージ</div>
    </article>

    <article class="card"><div class="thumb"></div></article>
    <article class="card"><div class="thumb"></div></article>
    <article class="card">
      <div class="thumb crm">
        <div class="crm-links"><a>Home</a><a>Lesson</a><a>Schedule</a><a>Analytics</a><a>Executive</a><span>試験運用中</span></div>
        <div class="crm-tools">
          <div class="crm-kana"><button class="off">あ</button><button>か</button><button>さ</button><button>た</button><button>な</button><button>は</button><button>ま</button><button>や</button><button>ら</button><button>わ</button><button>全</button></div>
          <div class="crm-radio"><i></i>会員<i></i>休会<i></i>退会<i class="on"></i>全員を表示</div>
          <span class="crm-count">計87名</span>
          <button class="crm-add">+ Add 生徒追加</button>
        </div>
      </div>
    </article>

  </section>
</main>
</body>
</html>
```

FILE: styles.css
```css
* { box-sizing: border-box; }
html, body { margin: 0; height: 1588px; overflow: hidden; }
body {
  font-family: Inter, "Noto Sans CJK JP", sans-serif;
  background: linear-gradient(100deg, #48e3ff 0%, #33f5ff 100%);
  color: #212529;
}
.defs { display: none; }
p { margin: 0; }
ul { margin: 0; padding: 0; list-style: none; }

/* top bar */
.topbar { display: flex; align-items: center; height: 110px; padding: 0 134px 0 121px; background: #f8f9fa; }
.logo { width: 37px; height: 37px; flex: none; }
.brand { margin-left: 20px; font-size: 38px; line-height: 46px; color: #1a1a1a; }
.version { margin: 0 0 13px 25px; font-size: 23px; font-weight: 600; line-height: 28px; letter-spacing: .8px; color: #212529; }
.clock { margin-left: 74px; font-size: 31.600px; line-height: 40px; color: #ccc; }
.dash { width: 36px; height: 4px; margin-left: 49px; border-radius: 2px; background: #3b9cff; }
.nav { display: flex; gap: 32.500px; margin-left: auto; align-self: flex-start; padding-top: 14px; }
.nav-item { display: flex; flex-direction: column; align-items: center; font-size: 22.300px; line-height: 26px; color: #7f7f7f; }
.nav-item.is-active { color: #1a1a1a; }
.nav-icon { height: 43px; width: 45px; margin-bottom: 8px; fill: currentColor; }

/* panel */
.panel { margin: 96px 88px 0; border-radius: 28px 28px 0 0; background: #fff; }
.panel-head { position: relative; display: flex; justify-content: space-between; height: 203px; padding: 34px 82px 0 49px; box-shadow: 0 4px 10px rgba(0,0,0,.05); }
.title { display: flex; align-items: center; margin: 0 0 0 -3px; font-size: 80px; line-height: 96px; font-weight: 500; letter-spacing: -3.500px; color: #212529; }
.title-star { width: 84px; height: 80px; margin: 0 0 5px 39px; fill: #fdcb80; }
.subtitle { font-size: 28.500px; line-height: 40px; color: #6c757d; }
.add { width: 36px; height: 36px; margin-top: 55px; fill: #6c757d; }

.grid { display: grid; grid-template-columns: repeat(3, 687px); column-gap: 61px; row-gap: 32px; padding: 48px 48px 0 49px; }
.card { display: flex; flex-direction: column; height: 500px; border: 4px solid #fafafa; border-radius: 24px; background: #fff; overflow: hidden; }
.thumb { height: 416px; flex: none; overflow: hidden; font-family: Roboto, "Noto Sans CJK JP", sans-serif; color: #333; background: #fcfcfc; }
.caption { height: 75px; border: 1px solid #f8f8f8; border-radius: 10px; background: #fff; text-align: center; font-size: 31px; line-height: 73px; color: #f6f7f9; white-space: nowrap; }

/* calendar */
.cal { background: #fdfdfd; }
.cal-head { display: grid; grid-template-columns: repeat(7, 90.3px); height: 54px; padding-left: 48px; }
.cal-day { display: flex; flex-direction: column; align-items: center; padding-top: 5px; }
.cal-day small { font-size: 8px; line-height: 12px; color: #777; }
.cal-day b { width: 32px; height: 32px; border-radius: 50%; font-size: 21px; line-height: 32px; font-weight: 400; text-align: center; color: #444; }
.is-today small { color: #4a7fd8; }
.is-today b { background: #4a7fd8; color: #fff; }
.is-soft b { background: #f1f2f5; }
.cal-body { display: flex; height: 312px; overflow: hidden; }
.hours { display: flex; flex-direction: column; width: 48px; flex: none; padding-right: 11px; text-align: right; font-size: 7.5px; line-height: 28.33px; color: #999; }
.hours .gmt { height: 25px; line-height: 13.4px; }
.lanes {
  position: relative; flex: 1;
  background-image: linear-gradient(#ccc 1px, transparent 1px), linear-gradient(#efefef 1px, transparent 1px), linear-gradient(to right, #e8e8e8 1px, transparent 1px);
  background-size: 100% 100%, 100% 28.33px, 90.3px 100%;
  background-position: 0 14px, 0 10px, 0 0;
  background-repeat: no-repeat, repeat, repeat;
}
.ev {
  position: absolute;
  left: calc(var(--d) * 90.3px + var(--x, 0) * 1px);
  top: calc(38.3px + (var(--t, 11) - 11) * 28.33px);
  width: calc(var(--w, 81) * 1px);
  height: calc(var(--h, 2) * 28.33px - 2px);
  padding: 1.5px 3px;
  border-radius: 2px;
  font-size: 8.6px; line-height: 10.7px; color: #fff; white-space: nowrap; overflow: hidden;
  font-family: "Noto Sans CJK JP", sans-serif;
}
.ev.b { background: #5aa0e0; }
.ev.o { background: #e36b43; box-shadow: 0 0 0 .5px #fff; }
.ev.g { background: #3f8f52; box-shadow: none; }
.ev.p { background: #f2cdc6; color: #d9a79e; }
.allday { top: 0; height: 13px; font-size: 9px; line-height: 12px; padding: 0 3px; z-index: 2; }
.allday2 { top: 13px; height: 9px; line-height: 9px; padding: 0 3px; }
.tag { clip-path: polygon(0 0, 96% 0, 100% 50%, 96% 100%, 0 100%); box-shadow: none !important; }
.now { position: absolute; left: 0; top: 36px; width: 90px; height: 1.5px; background: #d9534f; z-index: 3; }
.now::before { content: ""; display: block; width: 8px; height: 8px; margin: -3.300px 0 0 -4px; border-radius: 50%; background: #d9534f; }

/* sheets */
.sheet { background: #fcfcfc; }
.sh-head { display: flex; height: 62px; padding: 12px 0 0 20px; border-bottom: 2px solid #ececec; gap: 23px; }
.sheet-b .sh-head { height: 61px; padding-left: 19px; gap: 22px; padding-top: 11px; }
.sh-logo { width: 26px; height: 36px; flex: none; }
.sh-title { display: flex; align-items: center; height: 20px; margin-top: -2px; font-size: 17.800px; line-height: 20px; color: #333; white-space: nowrap; }
.sheet-b .sh-title { font-size: 17.400px; }
.sh-mini { width: 17px; height: 17px; margin-left: 28px; fill: #aaa; }
.sh-mini.star { fill: #ddd; }
.sh-mini + .sh-mini { margin-left: 6px; }
.sheet-a .sh-mini.star { margin-left: 42px; }
.sheet-a .sh-mini + .sh-mini { margin-left: -3px; }
.sh-menu { display: flex; gap: 15.500px; margin-top: 10px; font-size: 13.500px; line-height: 16px; color: #444; white-space: nowrap; }
.sheet-b .sh-menu { margin-top: 10px; gap: 15px; }
.sh-saved { margin-left: 5px; color: #999; text-decoration: underline; font-size: 12px; }
.tb { display: flex; height: 40px; align-items: center; border-bottom: 2px solid #e6e6e6; padding-left: 19px; padding-top: 2px; font-size: 12.500px; color: #555; white-space: nowrap; }
.tg { display: flex; align-items: center; justify-content: space-around; height: 18px; flex: none; border-right: 1px solid #ddd; padding-right: 2px; }
.g1 { width: 115px; } .g2 { width: 74px; } .g3 { width: 157px; justify-content: space-between; padding: 0 6px 0 13px; } .g4 { width: 113px; } .g5 { width: 73px; } .g6 { width: 122px; padding-left: 6px; }
.sheet-b .g1 { width: 113px; } .sheet-b .g2 { width: 72px; } .sheet-b .g3 { width: 155px; } .sheet-b .g4 { width: 111px; } .sheet-b .g5 { width: 73px; } .sheet-b .g6 { width: 119px; }
.sheet-b .tb { height: 39px; }
.ti { width: 18px; height: 18px; fill: #555; }
.caret { display: inline-block; width: 0; height: 0; border: 4px solid transparent; border-top: 4.500px solid #666; border-bottom: 0; }
.caret.mini { border-width: 3.500px; border-bottom: 0; margin-left: 1px; vertical-align: 2px; }
.dec { display: flex; flex-direction: column; align-items: center; line-height: 13px; }
.dec em { font-style: normal; font-size: 9px; line-height: 5px; color: #444; }
.fmt { font-size: 17px; }
.g6 b { font-weight: 700; font-size: 18px; }
.serif { font-family: "Liberation Serif", serif; font-weight: 700; }
.tcolor { display: inline-block; line-height: 16px; border-bottom: 3px double #444; padding: 0 3px; }
.tcolor.solid { border-bottom: 3px solid #111; }
.fx { height: 23px; border-bottom: 2px solid #e0e0e0; }
.fx i { display: block; width: 42px; height: 20px; border-right: 1px solid #ddd; text-align: center; font-family: "Liberation Serif", serif; font-size: 18px; line-height: 20px; color: #bbb; }
.tbl { table-layout: fixed; width: 740px; border-collapse: collapse; font-size: 13px; line-height: 15px; font-family: Roboto, "Noto Sans CJK JP", sans-serif; }
.c-rh { width: 42px; } .c-100 { width: 100px; } .c-98 { width: 98px; } .c-99 { width: 99px; } .c-258 { width: 258px; } .c-144 { width: 144px; }
.tbl td { height: 20.8px; padding: 0 3.500px; border-right: 1px solid #e8e8e8; border-bottom: 1px solid #ececec; white-space: nowrap; overflow: hidden; color: #333; }
.sheet-b .tbl td { height: 20.500px; }
.tbl .ch td { height: 24px; text-align: center; font-size: 11px; color: #888; border-bottom: 1px solid #ccc; border-right-color: #ddd; }
.sheet-b .tbl .ch td { height: 23.500px; }
.tbl .corner { border-right: 4px solid #ccc; border-bottom: 4px solid #ccc; }
.tbl .rh { padding: 0; text-align: center; font-size: 10.500px; color: #777; border-right: 1px solid #ccc; border-bottom: 1px solid #ddd; }
.tbl .r1 td { height: 24px; }
.tbl .blue { background: #72b3f6; color: #fff; font-size: 16px; }
.tbl .r2 td { font-size: 10px; color: #999; border-bottom: 1px solid #999; }
.tbl .r2 .rh { font-size: 10.500px; color: #777; }
.tbl .freeze td { height: 4.500px; padding: 0; background: #ddd; border: 0; line-height: 0; }
.tbl .dk { border-bottom: 1px solid #aaa; }
.tbl .lblue { color: #5fa8e0; }
.tbl .nblue { color: #4a7fd8; }
.tbl .red { color: #d0605a; }
.tbl .lime { background: #c3f583; }
.tbl .mint { background: #eefbf6; }
.tbl .amber { background: #f4c95d; }
.tbl .tiny { font-size: 11px; }
.tbl .wrap { line-height: 12px; vertical-align: top; padding-top: 1px; }
.tbl .ghost { text-align: right; color: #ccc; }
.tbl .dd::after { content: ""; float: right; margin: 6px 5px 0 0; border: 3.500px solid transparent; border-top: 4px solid #888; border-bottom: 0; }
.tbl .rose td { background: #e0bcb4; font-weight: 700; border-bottom: 1px solid #222; color: #3a2c2a; }
.tbl .rose .rh { background: #fcfcfc; font-weight: 400; color: #777; border-bottom: 1px solid #ddd; }
.tbl .ctr { text-align: center; }
.tbl .noline { border-bottom-color: transparent; }
.tbl .rule td { border-bottom: 1px solid #333; }
.tbl .rule .rh { border-bottom: 1px solid #ddd; }

/* google */
.ggl { display: flex; flex-direction: column; align-items: center; background: #fff; }
.ggl-logo { margin: 112px 0 0 12px; height: 71px; font-family: Lato, sans-serif; font-weight: 700; font-size: 80px; line-height: 78px; letter-spacing: -1.500px; }
.cb { color: #5f8fea; } .cr { color: #dc5f4e; } .cy { color: #f0c24a; } .cg { color: #63ae6b; }
.ggl-search { display: flex; align-items: center; justify-content: space-between; width: 517px; height: 40px; margin: 43px 0 0 16px; padding: 0 16px 0 14px; border: 1px solid #e4e4e4; border-radius: 20px; }
.ggl-lens { width: 14px; height: 14px; fill: #999; }
.ggl-mic { width: 13px; height: 24px; }
.ggl-btns { display: flex; gap: 11px; margin-top: 26px; }
.ggl-btn { height: 32px; border-radius: 2px; background: #f2f2f2; text-align: center; font-size: 12px; line-height: 32px; color: #666; }
.b1 { width: 98px; } .b2 { width: 127px; }
.ggl-lang { margin: 27px 0 0 8px; font-size: 11.700px; line-height: 16px; color: #333; }
.ggl-lang a { color: #2a2aa0; }

/* line works */
.lw { display: flex; flex-direction: column; border-radius: 16px 16px 0 0; background: #fcfcfc; }
.lw-bar { display: flex; align-items: center; height: 48px; flex: none; padding-left: 24px; background: #63b85e; color: #fff; }
.lw-burger { display: flex; flex-direction: column; gap: 5px; width: 20px; }
.lw-burger i { display: block; height: 2px; background: #fff; }
.lw-name { margin-left: 27px; font-size: 18.500px; line-height: 24px; white-space: nowrap; }
.lw-name b { font-size: 15px; letter-spacing: -.3px; }
.lw-apps { display: flex; gap: 19px; margin-left: auto; width: 190px; overflow: hidden; flex: none; }
.lw-apps svg { width: 25px; height: 24px; flex: none; }
.lw-book { fill: #45944c; }
.lw-main { display: flex; flex: 1; min-height: 0; }
.lw-left { width: 308px; flex: none; border-right: 1.500px solid #ddd; }
.lw-create { height: 39px; margin: 17px 11px 0 8px; border-radius: 2px; background: #66b85f; text-align: center; font-size: 12.500px; font-weight: 700; line-height: 39px; color: #fff; }
.lw-find { display: flex; align-items: center; margin: 11px 0 0 8px; }
.lw-input { display: flex; align-items: center; gap: 9px; width: 248px; height: 35px; padding-left: 9px; background: #eee; font-size: 12.500px; color: #aaa; white-space: nowrap; }
.lw-input svg { width: 16px; height: 16px; fill: #555; }
.lw-sort { margin-left: 8px; font-size: 15px; color: #555; display: flex; align-items: center; letter-spacing: -4px; }
.lw-sort .caret { margin-left: 8px; }
.lw-scroll { display: flex; margin-top: 12px; }
.lw-list { width: 300px; flex: none; }
.lw-thumb { width: 7px; height: 148px; border-radius: 4px; background: #ccc; }
.lw-banner { display: flex; align-items: flex-start; height: 74px; padding: 13px 0 0 14px; overflow: hidden; background: linear-gradient(100deg, #7dd9c2 0 14%, #7ad0c6 14% 22%, #68c0c9 22% 40%, #7ccbd2 40%); color: #fff; }
.lw-bulb { width: 33px; height: 50px; flex: none; }
.lw-bt { margin-left: 15px; white-space: nowrap; width: 218px; flex: none; overflow: hidden; }
.lw-bt1 { font-size: 16.600px; line-height: 24px; margin-top: 1px; }
.lw-bt2 { font-size: 12.500px; line-height: 18px; margin-top: 3px; color: #d9f3ef; }
.lw-x { margin-left: -2px; font-size: 24px; line-height: 18px; color: #6b7f82; font-weight: 300; }
.lw-sec { height: 44px; padding: 20px 0 0 9px; font-size: 11.500px; line-height: 16px; color: #888; }
.lw-row { display: flex; height: 73px; padding: 11px 0 0 8px; gap: 16px; }
.lw-row.is-sel { background: #e9f1fd; }
.lw-av { display: flex; align-items: center; justify-content: center; width: 50px; height: 50px; flex: none; background: #63b85e; }
.lw-av svg { width: 30px; height: 30px; fill: #fff; }
.lw-av.big { width: 41px; height: 41px; }
.lw-av.big svg { width: 26px; height: 26px; }
.lw-av.is-w { background: #fff; border: 1px solid #e6e6e6; }
.lw-av.is-w svg { width: 38px; height: 30px; }
.lw-info { flex: 1; min-width: 0; padding-right: 12px; }
.lw-top { display: flex; align-items: center; height: 18px; font-size: 13px; color: #222; }
.lw-top b { flex: 1; margin-left: 5px; font-weight: 700; white-space: nowrap; }
.lw-top span { font-size: 12px; color: #999; }
.lw-bot { width: 15px; height: 17px; flex: none; }
.lw-info p { margin-top: 3px; font-size: 11.800px; line-height: 18px; color: #a0a0a0; white-space: nowrap; }
.lw-right { flex: 1; min-width: 0; }
.lw-chat-head { display: flex; align-items: flex-start; height: 76px; padding: 18px 0 0 14px; border-bottom: 1px solid #e8e8e8; font-size: 14.500px; line-height: 18px; color: #333; }
.lw-chat-head .lw-bot { margin: 0 6px 0 14px; }
.lw-chat-head .lw-av { height: 39px; width: 39px; margin-right: 1px; }
.lw-pill { width: max-content; margin: 20px auto 0; padding: 0 12px; height: 20px; background: #f1f1f1; font-size: 11.500px; line-height: 20px; color: #999; position: relative; left: 13px; }
.lw-msg { display: flex; gap: 14px; margin-top: 16px; padding-left: 12px; }
.lw-msg-body { flex: 1; min-width: 0; }
.lw-from { font-size: 12.800px; line-height: 18px; color: #555; }
.lw-bubble-row { display: flex; align-items: flex-end; gap: 7px; margin-top: 3px; }
.lw-bubble { width: 245px; flex: none; background: #ededed; }
.lw-bubble p { padding: 9px 11px 6px; font-size: 13px; line-height: 21px; color: #444; white-space: nowrap; }
.lw-link { display: flex; justify-content: space-between; height: 36px; padding: 0 11px; border-top: 1px solid #bbb; font-size: 11.500px; line-height: 36px; color: #aaa; }
.lw-bubble-row time { font-size: 12px; line-height: 18px; color: #999; margin-bottom: 1px; }

/* super */
.sup { font-family: "Noto Sans CJK JP", sans-serif; background: #fbfbfb; color: #333; }
.sup-top { display: flex; height: 155px; padding: 15px 0 0 18px; align-items: flex-start; }
.sup-logo { width: 178px; height: 36px; margin-top: 13px; flex: none; overflow: visible; }
.sup-logo span { display: block; width: 300px; transform: scale(.49, 1.5); transform-origin: 0 0; font-size: 24px; line-height: 24px; font-family: "Liberation Sans", "Noto Sans CJK JP", sans-serif; font-style: italic; font-weight: 700; color: #3f84c8; white-space: nowrap; }
.sup-dates { width: 222px; flex: none; font-family: "Liberation Mono", "Noto Sans CJK JP", monospace; font-size: 12.500px; line-height: 15px; font-weight: 700; color: #333; white-space: nowrap; }
.sup-flag { width: 155px; height: 34px; flex: none; border: 1px solid #e5695e; background: #fcfba9; text-align: center; font-size: 13px; line-height: 32px; color: #d9533f; white-space: nowrap; }
.sup-tabs { display: flex; gap: 2px; height: 38px; width: 100%; padding: 0 0 0 18px; border-bottom: 3px solid #4077c8; overflow: hidden; }
.sup-tab { height: 35px; flex: none; padding-top: 2px; border: 1px solid #ddd; border-bottom: 0; border-radius: 5px 5px 0 0; background: linear-gradient(#fff, #f2f2f2); text-align: center; font-size: 13.500px; line-height: 15.500px; font-weight: 700; color: #333; white-space: nowrap; overflow: hidden; }
.t1 { width: 143px; } .t2 { width: 170px; } .t3 { width: 122px; } .t4 { width: 141px; } .t5 { width: 120px; }
.sup-tab.is-on { background: #4077c8; border-color: #4077c8; color: #fff; }
.sup-crumb { padding-left: 18px; margin-top: 4px; font-size: 13px; line-height: 18px; color: #333; }
.sup-main { display: flex; gap: 25px; margin-top: 8px; padding-left: 18px; }
.sup-side { width: 227px; flex: none; border-top: 6px solid #4077c8; border-radius: 4px 4px 0 0; }
.sup-side li { display: flex; align-items: center; min-height: 29.300px; padding-left: 29px; background: #eef4fa; border: 1px solid #b5c2cf; border-top: 0; border-bottom: 1px solid #8fa3b8; font-size: 12.800px; line-height: 16px; color: #40709f; white-space: nowrap; }
.sup-side li::before { content: ""; width: 11px; height: 11px; margin: 0 7px 0 -18px; flex: none; border-radius: 3px; background: #9cc0e8; }
.sup-side .two { min-height: 44px; }
.sup-news { flex: 1; min-width: 0; overflow: hidden; }
.sup-news h3 { display: flex; align-items: flex-start; gap: 7px; height: 29px; margin: 0; font-size: 18.500px; line-height: 22px; font-weight: 700; color: #333; border-bottom: 1px solid #666; white-space: nowrap; }
.sup-news h3::before { content: ""; width: 8px; height: 23px; border-radius: 2px; background: #4d84d8; }
.sup-table { width: 500px; table-layout: fixed; border-collapse: collapse; margin-top: 5px; font-size: 13px; }
.sup-table th { height: 23px; padding: 0; background: #fdf6ec; border: 1px solid #c8c8c8; border-bottom: 2px solid #ccc; font-weight: 400; line-height: 22px; color: #444; }
.sup-table td { height: 192px; padding: 0 4px; border: 1px solid #bbb; vertical-align: middle; }
.sup-table th:first-child, .sup-table th:nth-child(2) { width: 202px; }
.sup-table .mono { font-family: "Liberation Mono", monospace; font-size: 11px; color: #444; }
.sup-table .alert { color: #e03a2a; font-weight: 700; }

/* crm */
.crm { padding: 4px 0 0 3px; font-family: "Liberation Serif", "Noto Sans CJK JP", serif; background: #fff; }
.crm-links { display: flex; gap: 6px; height: 29px; border-bottom: 1px solid #ccc; font-size: 14px; line-height: 22px; }
.crm-links a { color: #5a3e8e; text-decoration: underline; }
.crm-links span { color: #444; margin-left: 1px; font-size: 14px; }
.crm-tools { display: flex; align-items: flex-start; margin-top: 16px; font-size: 13px; color: #555; white-space: nowrap; }
.crm-kana { display: flex; }
.crm-kana button { width: 25.500px; height: 22px; padding: 0; border: 1px solid #bbb; background: #fff; font: inherit; color: #444; }
.crm-kana .off { background: #eee; color: #aaa; border-color: #ddd; }
.crm-radio { display: flex; align-items: center; height: 24px; margin: -2px 0 0 10px; padding: 0 4px 0 8px; border: 1px solid #f0f0f0; font-size: 14px; }
.crm-radio i { width: 10px; height: 10px; margin: 0 2px 0 4px; border: 1px solid #888; border-radius: 50%; }
.crm-radio i.on { background: #3a78e8; border-color: #3a78e8; }
.crm-count { margin-left: 14px; }
.crm-add { margin-left: 14px; height: 22px; padding: 0 6px; border: 1px solid #bbb; background: #fff; font: inherit; color: #444; }
```
